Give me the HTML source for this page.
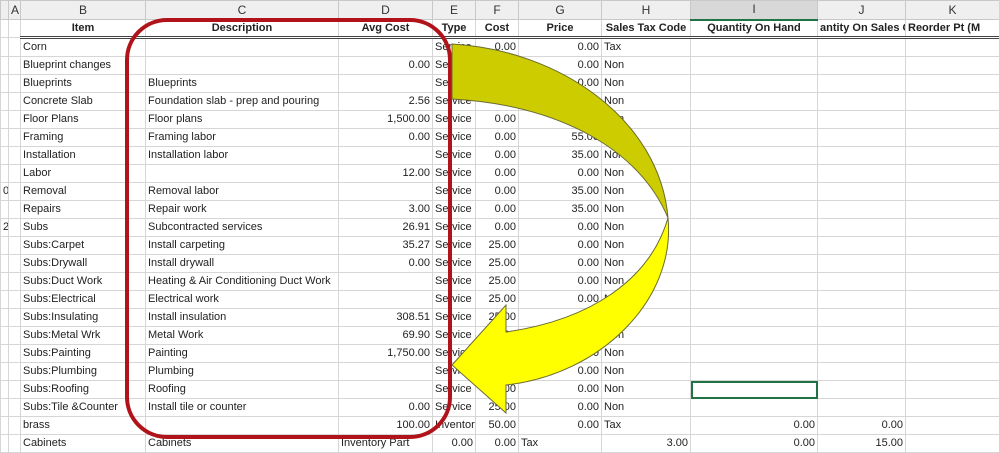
<!DOCTYPE html><html><head><style>
body{margin:0;width:999px;height:444px;overflow:hidden;background:#fff;font-family:"Liberation Sans",Arial,sans-serif;font-size:11px;color:#222;position:relative}
table{border-collapse:collapse;table-layout:fixed;position:absolute;left:0;top:0;width:999px}
td{height:17px;border:1px solid #d6d6d6;padding:0 2px;white-space:nowrap;overflow:hidden;line-height:17px;box-sizing:border-box}
tr.h td{background:#efefef;text-align:center;color:#333;font-size:12px;height:19px;border-color:#c8c8c8}
tr.t td{font-weight:bold;text-align:center;border-bottom:3px double #444;height:18px;line-height:15px}
.r{text-align:right}
td.dash{border-right:1px dashed #888}
</style></head><body>
<table>
<colgroup><col style="width:8px"><col style="width:12px"><col style="width:125px"><col style="width:193px"><col style="width:94px"><col style="width:43px"><col style="width:43px"><col style="width:83px"><col style="width:89px"><col style="width:127px"><col style="width:88px"><col style="width:94px"></colgroup>
<tr class="h"><td></td><td>A</td><td>B</td><td>C</td><td>D</td><td>E</td><td>F</td><td>G</td><td>H</td><td style="background:#d8d8d8;border-bottom:2px solid #217346">I</td><td>J</td><td>K</td></tr>
<tr class="t"><td style="border-bottom:1px solid #d6d6d6"></td><td style="border-bottom:1px solid #d6d6d6"></td><td>Item</td><td>Description</td><td>Avg Cost</td><td>Type</td><td>Cost</td><td>Price</td><td>Sales Tax Code</td><td>Quantity On Hand</td><td style="text-align:left">antity On Sales Ord</td><td style="text-align:left">Reorder Pt (M</td></tr>
<tr><td></td><td></td><td>Corn</td><td></td><td class="r"></td><td>Service</td><td class="r dash">0.00</td><td class="r">0.00</td><td>Tax</td><td></td><td></td><td></td></tr>
<tr><td></td><td></td><td>Blueprint changes</td><td></td><td class="r">0.00</td><td>Service</td><td class="r dash">0.00</td><td class="r">0.00</td><td>Non</td><td></td><td></td><td></td></tr>
<tr><td></td><td></td><td>Blueprints</td><td>Blueprints</td><td class="r"></td><td>Service</td><td class="r dash">0.00</td><td class="r">0.00</td><td>Non</td><td></td><td></td><td></td></tr>
<tr><td></td><td></td><td>Concrete Slab</td><td>Foundation slab - prep and pouring</td><td class="r">2.56</td><td>Service</td><td class="r dash">0.00</td><td class="r">0.00</td><td>Non</td><td></td><td></td><td></td></tr>
<tr><td></td><td></td><td>Floor Plans</td><td>Floor plans</td><td class="r">1,500.00</td><td>Service</td><td class="r dash">0.00</td><td class="r">0.00</td><td>Non</td><td></td><td></td><td></td></tr>
<tr><td></td><td></td><td>Framing</td><td>Framing labor</td><td class="r">0.00</td><td>Service</td><td class="r dash">0.00</td><td class="r">55.00</td><td>Non</td><td></td><td></td><td></td></tr>
<tr><td></td><td></td><td>Installation</td><td>Installation labor</td><td class="r"></td><td>Service</td><td class="r dash">0.00</td><td class="r">35.00</td><td>Non</td><td></td><td></td><td></td></tr>
<tr><td></td><td></td><td>Labor</td><td></td><td class="r">12.00</td><td>Service</td><td class="r dash">0.00</td><td class="r">0.00</td><td>Non</td><td></td><td></td><td></td></tr>
<tr><td>0</td><td></td><td>Removal</td><td>Removal labor</td><td class="r"></td><td>Service</td><td class="r dash">0.00</td><td class="r">35.00</td><td>Non</td><td></td><td></td><td></td></tr>
<tr><td></td><td></td><td>Repairs</td><td>Repair work</td><td class="r">3.00</td><td>Service</td><td class="r dash">0.00</td><td class="r">35.00</td><td>Non</td><td></td><td></td><td></td></tr>
<tr><td>2</td><td></td><td>Subs</td><td>Subcontracted services</td><td class="r">26.91</td><td>Service</td><td class="r dash">0.00</td><td class="r">0.00</td><td>Non</td><td></td><td></td><td></td></tr>
<tr><td></td><td></td><td>Subs:Carpet</td><td>Install carpeting</td><td class="r">35.27</td><td>Service</td><td class="r dash">25.00</td><td class="r">0.00</td><td>Non</td><td></td><td></td><td></td></tr>
<tr><td></td><td></td><td>Subs:Drywall</td><td>Install drywall</td><td class="r">0.00</td><td>Service</td><td class="r dash">25.00</td><td class="r">0.00</td><td>Non</td><td></td><td></td><td></td></tr>
<tr><td></td><td></td><td>Subs:Duct Work</td><td>Heating &amp; Air Conditioning Duct Work</td><td class="r"></td><td>Service</td><td class="r dash">25.00</td><td class="r">0.00</td><td>Non</td><td></td><td></td><td></td></tr>
<tr><td></td><td></td><td>Subs:Electrical</td><td>Electrical work</td><td class="r"></td><td>Service</td><td class="r dash">25.00</td><td class="r">0.00</td><td>Non</td><td></td><td></td><td></td></tr>
<tr><td></td><td></td><td>Subs:Insulating</td><td>Install insulation</td><td class="r">308.51</td><td>Service</td><td class="r dash">25.00</td><td class="r">0.00</td><td>Non</td><td></td><td></td><td></td></tr>
<tr><td></td><td></td><td>Subs:Metal Wrk</td><td>Metal Work</td><td class="r">69.90</td><td>Service</td><td class="r dash">25.00</td><td class="r">0.00</td><td>Non</td><td></td><td></td><td></td></tr>
<tr><td></td><td></td><td>Subs:Painting</td><td>Painting</td><td class="r">1,750.00</td><td>Service</td><td class="r dash">25.00</td><td class="r">0.00</td><td>Non</td><td></td><td></td><td></td></tr>
<tr><td></td><td></td><td>Subs:Plumbing</td><td>Plumbing</td><td class="r"></td><td>Service</td><td class="r dash">25.00</td><td class="r">0.00</td><td>Non</td><td></td><td></td><td></td></tr>
<tr><td></td><td></td><td>Subs:Roofing</td><td>Roofing</td><td class="r"></td><td>Service</td><td class="r dash">25.00</td><td class="r">0.00</td><td>Non</td><td style="outline:2px solid #217346;outline-offset:-2px"></td><td></td><td></td></tr>
<tr><td></td><td></td><td>Subs:Tile &amp;Counter</td><td>Install tile or counter</td><td class="r">0.00</td><td>Service</td><td class="r dash">25.00</td><td class="r">0.00</td><td>Non</td><td></td><td></td><td></td></tr>
<tr><td></td><td></td><td>brass</td><td></td><td class="r">100.00</td><td>Inventory</td><td class="r dash">50.00</td><td class="r">0.00</td><td>Tax</td><td class="r">0.00</td><td class="r">0.00</td><td></td></tr>
<tr><td></td><td></td><td>Cabinets</td><td>Cabinets</td><td>Inventory Part</td><td class="r">0.00</td><td class="r dash">0.00</td><td>Tax</td><td class="r">3.00</td><td class="r">0.00</td><td class="r">15.00</td><td></td></tr>
</table>
<svg width="999" height="444" style="position:absolute;left:0;top:0">
<rect x="127" y="20" width="323" height="417" rx="40" fill="none" stroke="#b0141a" stroke-width="4"/>
<path d="M452,44 C560,50 660,120 668,218 C640,150 560,105 452,99 Z" fill="#cccc00" stroke="#6b6b30" stroke-width="1"/>
<path d="M668,218 C676,300 600,375 506,385 L506,413 L452,365 L506,305 L506,332 C590,320 650,280 668,218 Z" fill="#ffff00" stroke="#6b6b30" stroke-width="1"/>
</svg>
</body></html>
